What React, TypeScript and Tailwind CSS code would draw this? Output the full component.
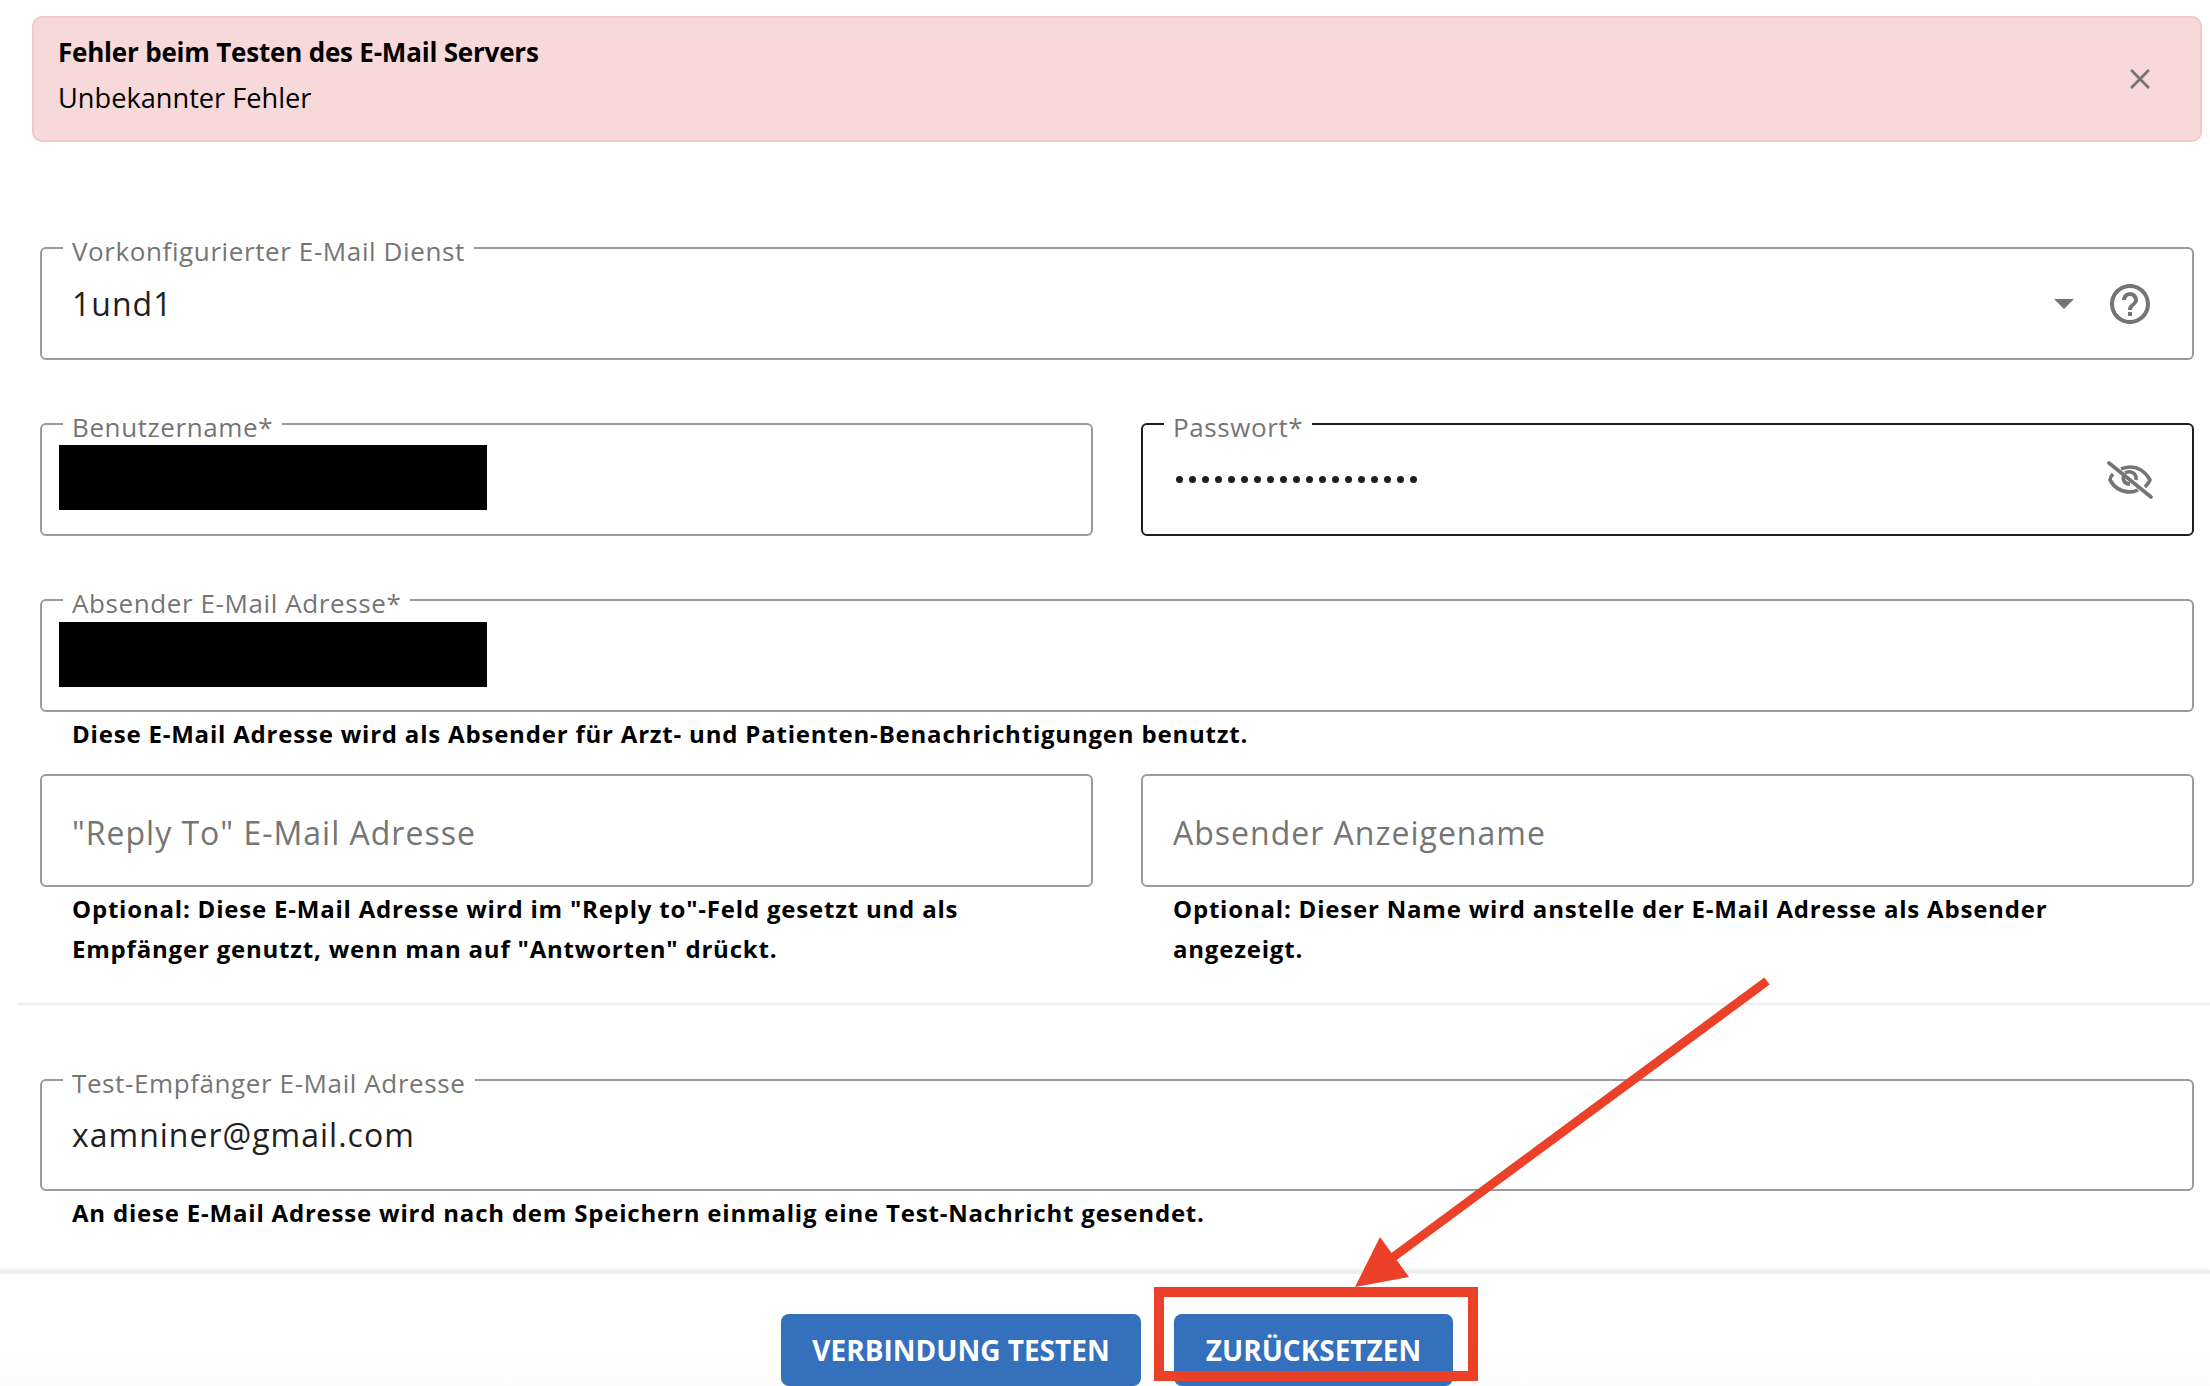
import React from 'react';

function Field({ label, children, active, className = 'h-[113px]' }: { label?: string; children?: React.ReactNode; active?: boolean; className?: string }) {
  return (
    <div className={`relative flex items-center rounded-[6px] border-2 pl-[30px] pr-[38px] ${active ? 'border-[#1f1f1f]' : 'border-[#9b9b9b]'} ${className}`}>
      {label && (
        <span className="absolute left-[21px] top-[-14px] bg-white px-[9px] text-[26px] leading-[32px] tracking-[0.6px] text-[#757575] whitespace-nowrap">
          {label}
        </span>
      )}
      {children}
    </div>
  );
}

function Hint({ children }: { children: React.ReactNode }) {
  return <p className="mt-[2px] px-[32px] text-[24px] leading-[40px] font-bold tracking-[0.8px] text-black">{children}</p>;
}

const Redacted = ({ className }: { className: string }) => <div className={`-ml-[13px] h-[65px] w-[428px] bg-black ${className}`} />;

const Value = ({ children }: { children: React.ReactNode }) => (
  <span className="text-[32px] leading-[52px] tracking-[1px] text-[#1f1f1f]">{children}</span>
);

const Placeholder = ({ children }: { children: React.ReactNode }) => (
  <span className="pt-[5px] text-[32px] leading-[52px] tracking-[1px] text-[#757575]">{children}</span>
);

export default function App() {
  return (
    <div className='relative flex h-[1386px] w-[2210px] flex-col overflow-hidden bg-white [font-family:"Open_Sans",sans-serif]'>
      <div className="ml-[32px] mr-[8px] mt-[16px] flex h-[126px] shrink-0 items-center justify-between rounded-[10px] border-2 border-[#f3c8c8] bg-[#f8d9da] pl-[24px] pr-[43px]">
        <div className="pb-[8px]">
          <div className="text-[26px] leading-[45px] font-bold tracking-[-0.2px] text-black">Fehler beim Testen des E-Mail Servers</div>
          <div className="text-[27.2px] leading-[45px] text-black">Unbekannter Fehler</div>
        </div>
        <svg viewBox="0 0 24 24" className="h-[34px] w-[34px] fill-[#7a7373]">
          <path d="M19 6.41 17.59 5 12 10.59 6.41 5 5 6.41 10.59 12 5 17.59 6.41 19 12 13.41 17.59 19 19 17.59 13.41 12z" />
        </svg>
      </div>

      <div className="ml-[40px] mr-[16px] mt-[105px]">
        <Field label="Vorkonfigurierter E-Mail Dienst">
          <Value>1und1</Value>
          <div className="ml-auto flex items-center gap-[32px]">
            <svg viewBox="0 0 20 10" className="h-[10px] w-[20px] fill-[#757575]">
              <path d="M0 0h20L10 10z" />
            </svg>
            <svg viewBox="0 0 24 24" className="h-[48px] w-[48px] fill-[#757575]">
              <path d="M11 18h2v-2h-2v2zm1-16C6.48 2 2 6.48 2 12s4.48 10 10 10 10-4.48 10-10S17.52 2 12 2zm0 18c-4.41 0-8-3.59-8-8s3.59-8 8-8 8 3.59 8 8-3.59 8-8 8zm0-14c-2.21 0-4 1.79-4 4h2c0-1.1.9-2 2-2s2 .9 2 2c0 2-3 1.75-3 5h2c0-2.25 3-2.5 3-5 0-2.21-1.79-4-4-4z" />
            </svg>
          </div>
        </Field>

        <div className="mt-[63px] grid grid-cols-2 gap-x-[48px]">
          <Field label="Benutzername*"><Redacted className="mb-[5px]" /></Field>
          <Field label="Passwort*" active>
            <div className="flex gap-[6px] pl-[3px]">
              {Array.from({ length: 19 }).map((_, i) => (
                <span key={i} className="h-[7px] w-[7px] rounded-full bg-[#1f1f1f]" />
              ))}
            </div>
            <svg viewBox="0 0 46 38" fill="none" stroke="#757575" strokeWidth="3.6" className="ml-[auto] mr-[1px] h-[38px] w-[46px]">
              <path d="M2 2l42 34" strokeLinecap="round" />
              <path d="M6 13c-2 2-3 4-3 6 4 7 11 12 20 12 3 0 6-1 8-2M14 8c3-1 6-2 9-2 9 0 16 6 20 13-1 3-3 5-5 7" />
              <path d="M17 14c-2 4 0 9 6 9M18 12c5-3 12 0 11 7" />
            </svg>
          </Field>
        </div>

        <div className="mt-[63px]">
          <Field label="Absender E-Mail Adresse*"><Redacted className="mb-[3px]" /></Field>
        </div>
        <Hint>Diese E-Mail Adresse wird als Absender für Arzt- und Patienten-Benachrichtigungen benutzt.</Hint>

        <div className="mt-[20px] grid grid-cols-2 gap-x-[48px]">
          <div>
            <Field><Placeholder>"Reply To" E-Mail Adresse</Placeholder></Field>
            <Hint>Optional: Diese E-Mail Adresse wird im "Reply to"-Feld gesetzt und als Empfänger genutzt, wenn man auf "Antworten" drückt.</Hint>
          </div>
          <div>
            <Field><Placeholder>Absender Anzeigename</Placeholder></Field>
            <Hint>Optional: Dieser Name wird anstelle der E-Mail Adresse als Absender angezeigt.</Hint>
          </div>
        </div>
      </div>

      <div className="ml-[17px] mt-[34px] h-[2px] shrink-0 bg-[#eeeeee]" />

      <div className="ml-[40px] mr-[16px] mt-[74px]">
        <Field label="Test-Empfänger E-Mail Adresse" className="h-[112px]">
          <Value>xamniner@gmail.com</Value>
        </Field>
        <Hint>An diese E-Mail Adresse wird nach dem Speichern einmalig eine Test-Nachricht gesendet.</Hint>
      </div>

      <div className="mt-auto flex h-[116px] shrink-0 justify-center gap-[33px] border-t-4 border-[#eeeeee] bg-gradient-to-b from-white via-white to-[#fcfcfc] pl-[24px] pt-[40px] shadow-[0_-2px_3px_rgba(0,0,0,0.04)]">
        <button className="h-[72px] w-[360px] rounded-[8px] bg-[#3470bc] text-[28px] font-bold text-white">VERBINDUNG TESTEN</button>
        <button className="h-[72px] w-[279px] rounded-[8px] bg-[#3470bc] text-[28px] font-bold text-white">ZURÜCKSETZEN</button>
      </div>

      {/* annotation drawn over the screenshot */}
      <div className="absolute left-[1154px] top-[1287px] h-[94px] w-[324px] border-[10px] border-[#eb4128]" />
      <svg viewBox="0 0 2210 1386" className="pointer-events-none absolute inset-0 h-[1386px] w-[2210px]">
        <path d="M1767 981 1392 1258" stroke="#eb4128" strokeWidth="9" fill="none" />
        <path d="M1380 1237 1355 1287 1409 1277z" fill="#eb4128" />
      </svg>
    </div>
  );
}
